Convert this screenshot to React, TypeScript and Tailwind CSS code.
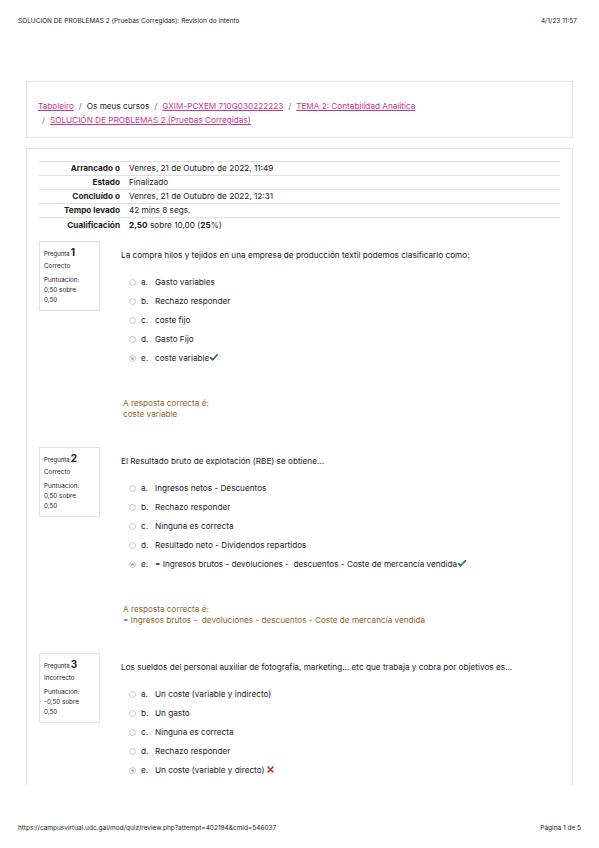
import React from 'react';

type Question = {
  num: number;
  state: string;
  score: string;
  text: string;
  options: string[];
  picked: number;
  correct: boolean;
  answer?: string;
};

const questions: Question[] = [
  {
    num: 1,
    state: 'Correcto',
    score: '0,50 sobre',
    text: 'La compra hilos y tejidos en una empresa de producción textil podemos clasificarlo como:',
    options: ['Gasto variables', 'Rechazo responder', 'coste fijo', 'Gasto Fijo', 'coste variable'],
    picked: 4,
    correct: true,
    answer: 'coste variable',
  },
  {
    num: 2,
    state: 'Correcto',
    score: '0,50 sobre',
    text: 'El Resultado bruto de explotación (RBE) se obtiene...',
    options: [
      'Ingresos netos - Descuentos',
      'Rechazo responder',
      'Ninguna es correcta',
      'Resultado neto - Dividendos repartidos',
      '= Ingresos brutos - devoluciones -  descuentos - Coste de mercancía vendida',
    ],
    picked: 4,
    correct: true,
    answer: '= Ingresos brutos -  devoluciones - descuentos - Coste de mercancía vendida',
  },
  {
    num: 3,
    state: 'Incorrecto',
    score: '-0,50 sobre',
    text: 'Los sueldos del personal auxiliar de fotografía, marketing... etc que trabaja y cobra por objetivos es...',
    options: ['Un coste (variable y indirecto)', 'Un gasto', 'Ninguna es correcta', 'Rechazo responder', 'Un coste (variable y directo)'],
    picked: 4,
    correct: false,
  },
];

const summary = [
  ['Arrancado o', 'Venres, 21 de Outubro de 2022, 11:49'],
  ['Estado', 'Finalizado'],
  ['Concluído o', 'Venres, 21 de Outubro de 2022, 12:31'],
  ['Tempo levado', '42 mins 8 segs.'],
];

function Check() {
  return (
    <svg width="8" height="7" viewBox="0 0 16 14" className="inline-block ml-[1px] -mt-[3px]">
      <path d="M1.5 7.5 L5.5 11.5 L14.5 1.5" fill="none" stroke="#357a32" strokeWidth="3.6" strokeLinecap="round" strokeLinejoin="round" />
    </svg>
  );
}

function Cross() {
  return (
    <svg width="7" height="7" viewBox="0 0 14 14" className="inline-block ml-[2px] -mt-[3px]">
      <path d="M2 2 L12 12 M12 2 L2 12" fill="none" stroke="#ca3120" strokeWidth="3.4" strokeLinecap="round" />
    </svg>
  );
}

function Radio({ on }: { on: boolean }) {
  return (
    <span className="w-[7px] h-[7px] rounded-full border-[0.8px] border-[#c4c8cc] flex items-center justify-center shrink-0">
      {on && <span className="w-[2.5px] h-[2.5px] rounded-full bg-[#b0b4b8]" />}
    </span>
  );
}

function QuestionBlock({ q }: { q: Question }) {
  return (
    <div className="flex">
      <div className="w-[61px] h-[70px] border border-[#dee2e6] px-[4px] pt-[5px] text-[6.3px] leading-[9px] text-[#1d2125] shrink-0">
        <div className="flex items-baseline">
          <span className="text-[6px]">Pregunta</span>
          <span className="text-[10px] font-bold leading-[10px] ml-[1px]">{q.num}</span>
        </div>
        <div className="mt-[4px]">{q.state}</div>
        <div className="mt-[4px] leading-[10px]">
          <div>Puntuación:</div>
          <div>{q.score}</div>
          <div>0,50</div>
        </div>
      </div>
      <div className="ml-[21px] flex-1">
        <div className="h-[14px] mt-[7px] flex items-center text-[8.2px]">{q.text}</div>
        <div className="mt-[11px] flex flex-col">
          {q.options.map((o, i) => (
            <div key={i} className="h-[19px] flex items-center pl-[8px] text-[8.2px]">
              <Radio on={i === q.picked} />
              <span className="ml-[5px] w-[14px]">{String.fromCharCode(97 + i)}.</span>
              <span className="whitespace-pre">{o}</span>
              {i === q.picked && (q.correct ? <Check /> : <Cross />)}
            </div>
          ))}
        </div>
        {q.answer && (
          <div className="mt-[30px] ml-[2px] text-[8.2px] leading-[11px] text-[#8e662e] whitespace-pre">
            <div>A resposta correcta é:</div>
            <div>{q.answer}</div>
          </div>
        )}
      </div>
    </div>
  );
}

export default function App() {
  return (
    <div className="w-[599px] h-[848px] bg-white flex flex-col font-['Inter',sans-serif] text-[#1d2125] overflow-hidden">
      <div className="mt-[17px] h-[10px] flex items-center justify-between pl-[18px] pr-[22px] text-[6.5px] text-[#222]">
        <span>SOLUCIÓN DE PROBLEMAS 2 (Pruebas Corregidas): Revisión do intento</span>
        <span>4/1/23 11:57</span>
      </div>

      <div className="mt-[54px] mx-[26px] h-[57px] border border-[#e3e3e3] pt-[17px] pl-[11px] text-[8.2px] leading-[14px]">
        <div className="flex items-center gap-[5px]">
          <span className="text-[#c8368a] underline">Taboleiro</span>
          <span className="text-[#6a737b]">/</span>
          <span>Os meus cursos</span>
          <span className="text-[#6a737b]">/</span>
          <span className="text-[#c8368a] underline">GXIM-PCXEM 710G030222223</span>
          <span className="text-[#6a737b]">/</span>
          <span className="text-[#c8368a] underline">TEMA 2: Contabilidad Analítica</span>
        </div>
        <div className="flex items-center gap-[5px] pl-[4px]">
          <span className="text-[#6a737b]">/</span>
          <span className="text-[#c8368a] underline">SOLUCIÓN DE PROBLEMAS 2 (Pruebas Corregidas)</span>
        </div>
      </div>

      <div className="mt-[10px] mx-[26px] border-x border-t border-[#e3e3e3] px-[12px] pt-[12px] pb-[5px]">
        <div className="text-[8.2px]">
          {summary.map(([k, v]) => (
            <div key={k} className="h-[14px] flex items-center border-t border-[#dee2e6]">
              <span className="w-[82px] text-right font-bold pr-[1px]">{k}</span>
              <span className="ml-[8px]">{v}</span>
            </div>
          ))}
          <div className="h-[16px] flex items-center border-t border-[#dee2e6]">
            <span className="w-[82px] text-right font-bold pr-[1px]">Cualificación</span>
            <span className="ml-[8px]">
              <b>2,50</b> sobre 10,00 (<b>25</b>%)
            </span>
          </div>
        </div>

        <div className="mt-[8px] flex flex-col gap-[27px]">
          {questions.map((q) => (
            <QuestionBlock key={q.num} q={q} />
          ))}
        </div>
      </div>

      <div className="mt-auto mb-[14px] h-[10px] flex items-center justify-between pl-[18px] pr-[18px] text-[6.5px] text-[#222]">
        <span>https://campusvirtual.udc.gal/mod/quiz/review.php?attempt=402194&amp;cmid=546037</span>
        <span>Página 1 de 5</span>
      </div>
    </div>
  );
}
